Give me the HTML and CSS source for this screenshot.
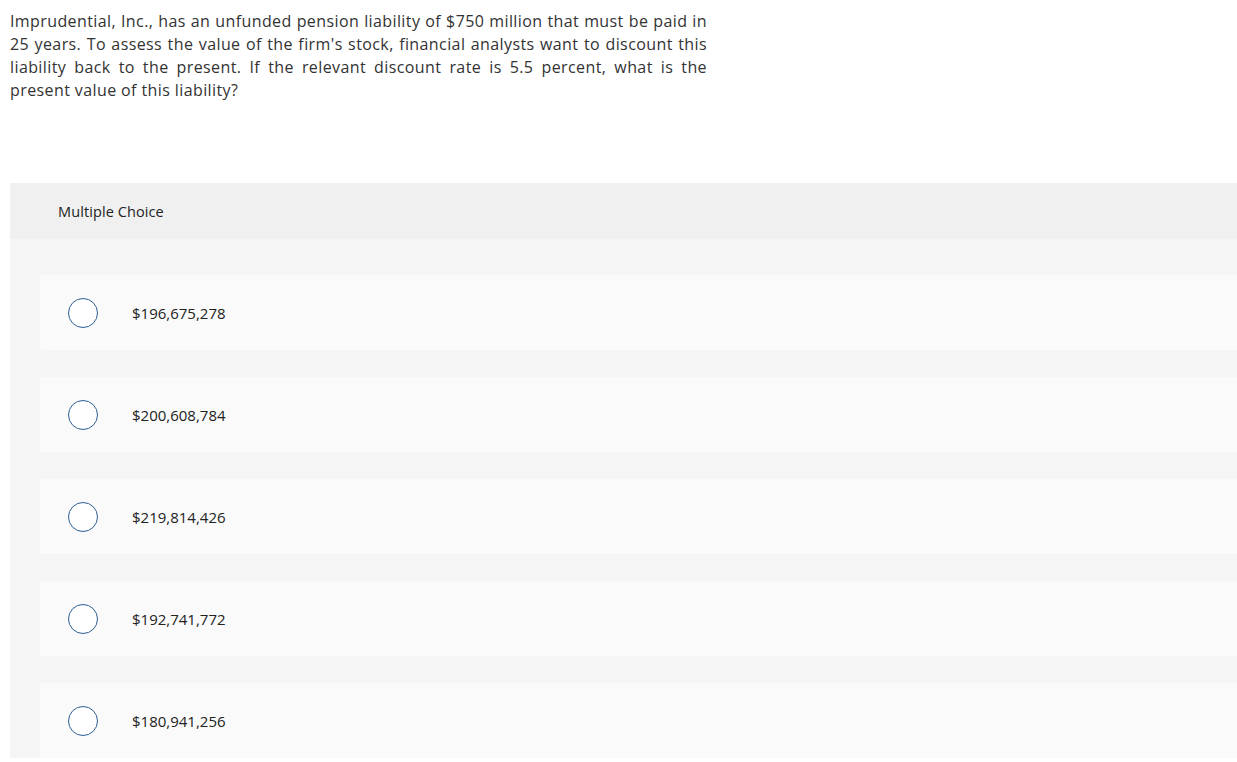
FILE: index.html
```html
<!DOCTYPE html>
<html>
<head>
<meta charset="utf-8">
<link rel="stylesheet" href="styles.css">
</head>
<body>
<div class="page">
  <p class="question">Imprudential, Inc., has an unfunded pension liability of $750 million that must be paid in 25 years. To assess the value of the firm's stock, financial analysts want to discount this liability back to the present. If the relevant discount rate is 5.5 percent, what is the present value of this liability?</p>
  <section class="mc">
    <header class="mc-head">Multiple Choice</header>
    <div class="mc-body">
      <div class="option"><span class="radio"></span><span class="label">$196,675,278</span></div>
      <div class="option"><span class="radio"></span><span class="label">$200,608,784</span></div>
      <div class="option"><span class="radio"></span><span class="label">$219,814,426</span></div>
      <div class="option"><span class="radio"></span><span class="label">$192,741,772</span></div>
      <div class="option"><span class="radio"></span><span class="label">$180,941,256</span></div>
    </div>
  </section>
</div>
</body>
</html>
```

FILE: styles.css
```css
html, body {
  margin: 0;
  padding: 0;
  background: #ffffff;
}
body {
  font-family: "Open Sans", "Liberation Sans", sans-serif;
  color: #333333;
}
.page {
  padding-left: 10px;
}
.question {
  margin: 0;
  padding-top: 10px;
  width: 697px;
  height: 92px;
  font-size: 16px;
  letter-spacing: 0.4px;
  line-height: 23px;
  text-align: justify;
  color: #333333;
}
.mc {
  margin-top: 81px;
  background: #f5f5f5;
}
.mc-head {
  height: 56px;
  display: flex;
  align-items: center;
  padding-left: 48px;
  background: #f0f0f0;
  font-size: 14.5px;
  letter-spacing: 0.1px;
  color: #222222;
}
.mc-body {
  padding: 36px 0 0 30px;
}
.option {
  height: 75px;
  margin-bottom: 27px;
  display: flex;
  align-items: center;
  padding-left: 28px;
  background: #fafafa;
  border-radius: 3px 0 0 3px;
}
.radio {
  width: 28px;
  height: 28px;
  border: 1.5px solid #2b5e93;
  border-radius: 50%;
  background: #ffffff;
  flex: none;
}
.label {
  margin-left: 34px;
  font-size: 15px;
  color: #222222;
}
```
